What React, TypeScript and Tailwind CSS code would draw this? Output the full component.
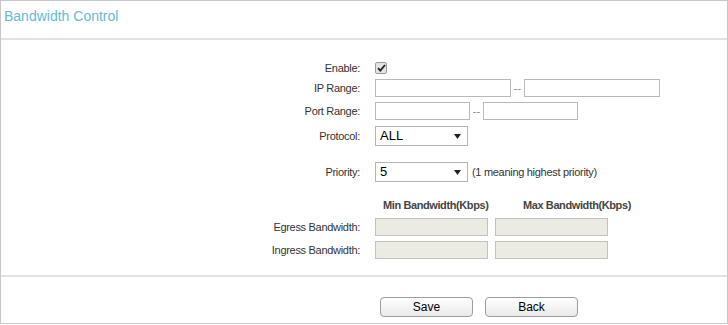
import React from "react";

function Field({ w }: { w: number }) {
  return <div className="h-[18px] border border-[#b9b9b9] bg-white" style={{ width: w }} />;
}

function Disabled() {
  return <div className="h-[18px] w-[113px] border border-[#c2c2c2] bg-[#ebebe4]" />;
}

function Select({ value }: { value: string }) {
  return (
    <div className="flex h-[20px] w-[93px] items-center justify-between border border-[#b4b4b4] bg-white pl-[4px] pr-[6px] text-[13px] tracking-normal text-black">
      <span>{value}</span>
      <svg width="7" height="5" viewBox="0 0 7 5">
        <path d="M0 0h7L3.5 5z" fill="#222" />
      </svg>
    </div>
  );
}

function Row({ label, cls, children }: { label: string; cls: string; children?: React.ReactNode }) {
  return (
    <div className={`flex items-center ${cls}`}>
      <span className="w-[374px] shrink-0 pr-[15px] text-right text-[#333]">{label}</span>
      {children}
    </div>
  );
}

function Dash() {
  return <span className="w-[13px] text-center tracking-normal text-[#888]">--</span>;
}

export default function App() {
  return (
    <div className="h-[325px] w-[728px] bg-white font-['Liberation_Sans',Arial,sans-serif] text-[11px] leading-[14px] tracking-[-0.3px]">
      <div className="h-[324px] border border-[#c8c8c8]">
        {/* Title */}
        <div className="h-[39px] border-b-2 border-[#e2e2e2] px-[3px] pt-[6px] text-[14px] leading-[18px] tracking-normal text-[#62bdd3]">
          Bandwidth Control
        </div>

        {/* Form */}
        <Row label="Enable:" cls="mt-[22px] h-[12px]">
          <div className="flex h-[12px] w-[12px] items-center justify-center rounded-[2px] border border-[#9c9c9c] bg-[#e4e4e4]">
            <svg width="9" height="8" viewBox="0 0 9 8">
              <path d="M1 4.2l2.3 2.4L8 1" fill="none" stroke="#222" strokeWidth="1.8" />
            </svg>
          </div>
        </Row>
        <Row label="IP Range:" cls="mt-[5px] h-[18px]">
          <Field w={136} />
          <Dash />
          <Field w={136} />
        </Row>
        <Row label="Port Range:" cls="mt-[5px] h-[18px]">
          <Field w={95} />
          <Dash />
          <Field w={95} />
        </Row>
        <Row label="Protocol:" cls="mt-[6px] h-[20px]">
          <Select value="ALL" />
        </Row>
        <Row label="Priority:" cls="mt-[16px] h-[20px]">
          <Select value="5" />
          <span className="ml-[4px] text-[#333]">(1 meaning highest priority)</span>
        </Row>
        <div className="mt-[16px] flex h-[14px] items-center font-bold tracking-[-0.4px] text-[#444]">
          <span className="w-[374px] shrink-0" />
          <span className="w-[148px] shrink-0 pl-[8px]">Min Bandwidth(Kbps)</span>
          <span>Max Bandwidth(Kbps)</span>
        </div>
        <Row label="Egress Bandwidth:" cls="mt-[6px] h-[18px]">
          <div className="flex gap-[7px]">
            <Disabled />
            <Disabled />
          </div>
        </Row>
        <Row label="Ingress Bandwidth:" cls="mt-[5px] h-[18px]">
          <div className="flex gap-[7px]">
            <Disabled />
            <Disabled />
          </div>
        </Row>

        {/* Actions */}
        <div className="mt-[16px] border-t-2 border-[#e2e2e2]" />
        <div className="mt-[20px] flex gap-[12px] pl-[379px]">
          <button className="h-[20px] w-[93px] rounded-[4px] border border-[#9d9d9d] bg-gradient-to-b from-white to-[#e9e9e9] text-[12px] tracking-normal text-black">
            Save
          </button>
          <button className="h-[20px] w-[93px] rounded-[4px] border border-[#9d9d9d] bg-gradient-to-b from-white to-[#e9e9e9] text-[12px] tracking-normal text-black">
            Back
          </button>
        </div>
      </div>
    </div>
  );
}
